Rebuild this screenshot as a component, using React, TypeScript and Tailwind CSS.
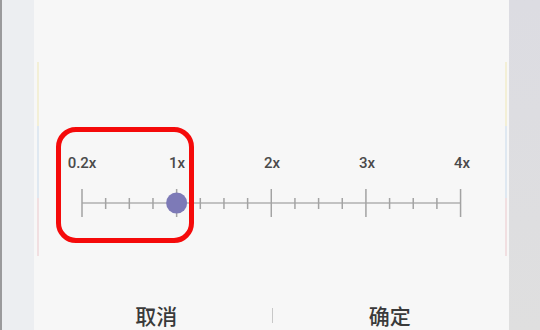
import React from 'react';

const labels = ['0.2x', '1x', '2x', '3x', '4x'];
const STEP = 23.66;

const EdgeLine: React.FC = () => (
  <div className="flex w-[2px] flex-col">
    <div className="h-[62px]" />
    <div className="h-[64px] bg-[#f3efd6]" />
    <div className="h-[72px] bg-[#dfe8f1]" />
    <div className="h-[58px] bg-[#f1dfe1]" />
  </div>
);

const SpeedSlider: React.FC = () => {
  const ticks = Array.from({ length: 17 }, (_, i) => i);
  return (
    <svg width="400" height="30" viewBox="0 0 400 30">
      <line x1="10" y1="15" x2={10 + 16 * STEP} y2="15" stroke="#b0b0b0" strokeWidth="1.5" />
      {ticks.map((i) => {
        const x = 10 + i * STEP;
        const major = i % 4 === 0;
        return (
          <line
            key={i}
            x1={x}
            x2={x}
            y1={major ? 1 : 10}
            y2={major ? 29 : 21}
            stroke="#a3a3a3"
            strokeWidth="1.5"
          />
        );
      })}
      <circle cx={10 + 4 * STEP} cy="15" r="10.5" fill="#7d7ab7" />
    </svg>
  );
};

export default function App() {
  return (
    <div className="flex h-[330px] w-[540px] overflow-hidden bg-[#f7f7f7]">
      <div className="w-[34px] border-l-2 border-[#9a9a9c] bg-[#eceef1]" />

      <div className="relative flex w-[475px] bg-[#f7f7f7]">
        <div className="w-[3px]" />
        <EdgeLine />

        <div className="flex flex-1 flex-col">
          <div className="mx-auto w-[400px] pt-[153px]">
            <div className="flex justify-between px-[10px] text-[15px] leading-[20px] font-medium text-[#4a4a4a] [font-family:Roboto,'Liberation_Sans',sans-serif]">
              {labels.map((l) => (
                <div key={l} className="flex w-0 justify-center whitespace-nowrap">
                  {l}
                </div>
              ))}
            </div>
            <div className="mt-[15px]">
              <SpeedSlider />
            </div>
          </div>

          <div className="mt-[83px] flex items-center text-[21px] leading-[28px] font-medium text-[#3a3a3a] [font-family:'Noto_Sans_CJK_SC',sans-serif]">
            <div className="flex flex-1 justify-center pl-[2px]">取消</div>
            <div className="h-[15px] w-px bg-[#c8c8c8]" />
            <div className="flex flex-1 justify-center pl-[2px]">确定</div>
          </div>
        </div>

        <EdgeLine />
        <div className="w-[2px]" />

        {/* red annotation frame */}
        <div className="absolute left-[22px] top-[127px] h-[116px] w-[138px] rounded-[20px] border-[5px] border-[#f50a0a]" />
      </div>

      <div className="flex-1 bg-gradient-to-b from-[#dcdce2] to-[#dfdfdf]" />
    </div>
  );
}
